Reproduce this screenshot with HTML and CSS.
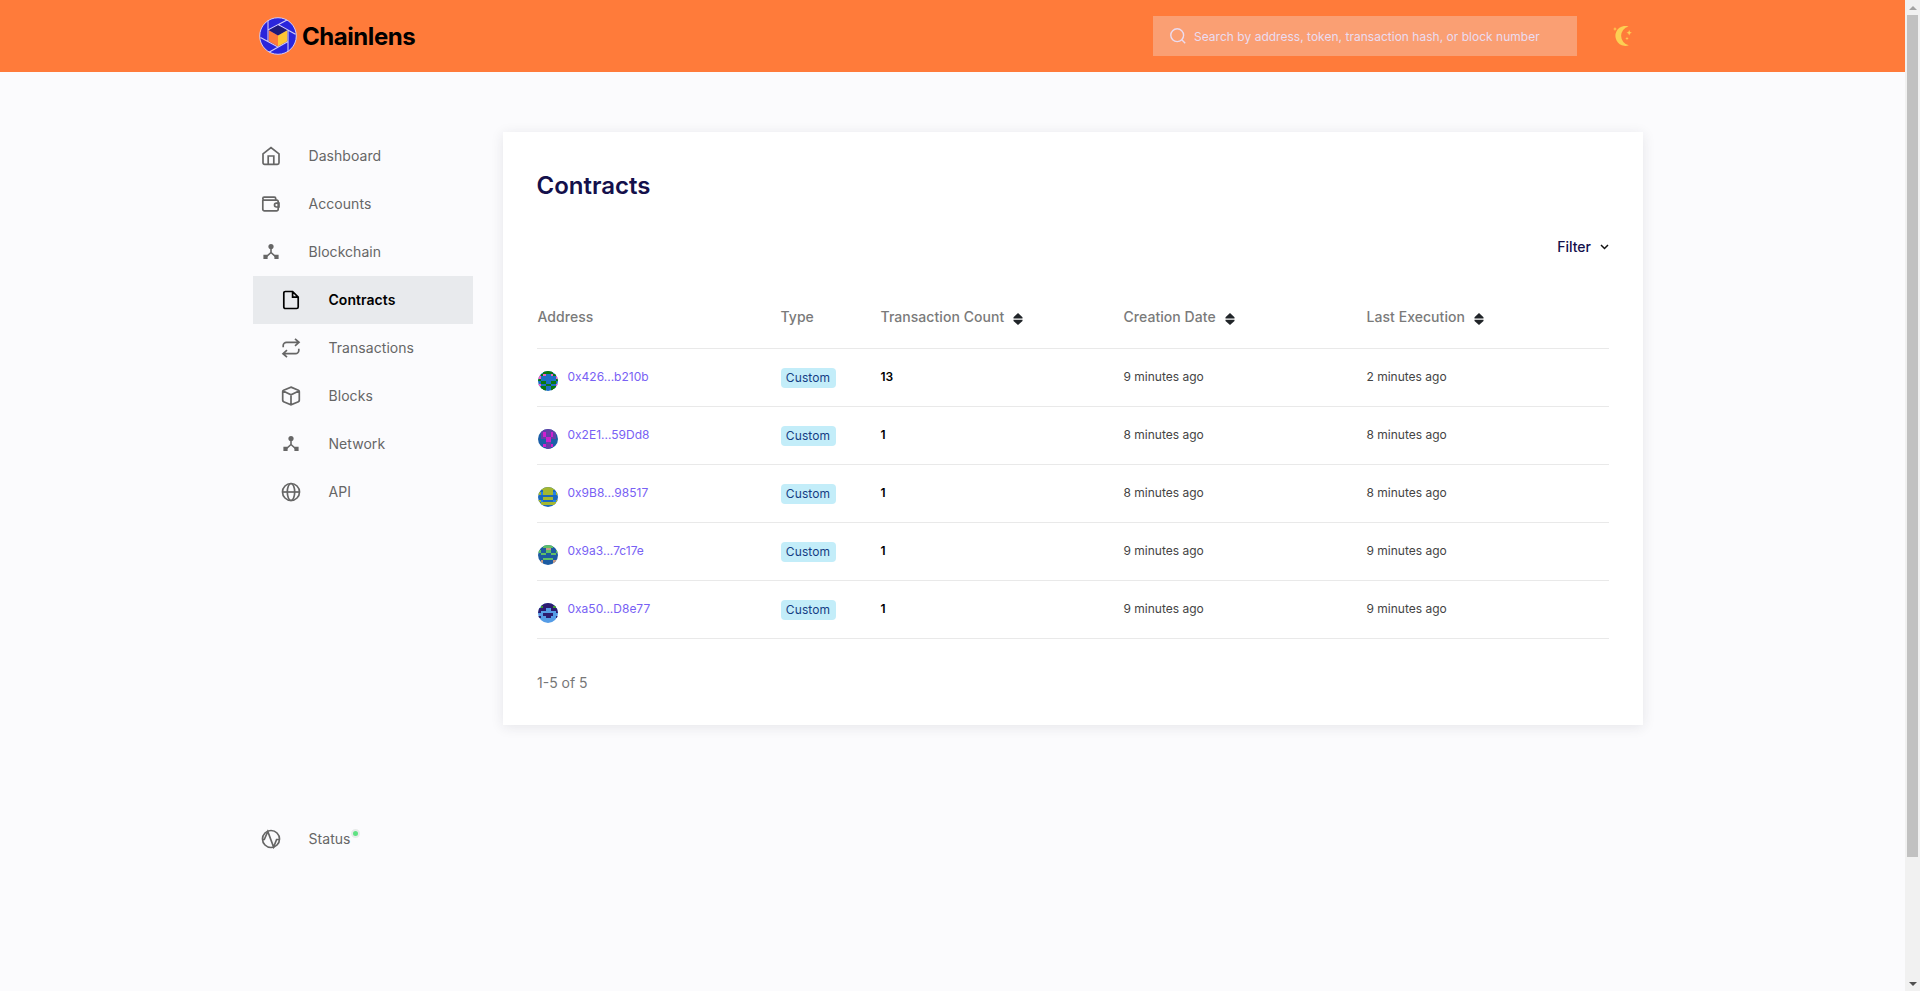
FILE: index.html
```html
<!DOCTYPE html>
<html lang="en">
<head>
<meta charset="utf-8">
<title>Chainlens</title>
<link rel="stylesheet" href="styles.css">
</head>
<body>
<svg class="defs" width="0" height="0">
  <defs>
    <symbol id="i-nodes" viewBox="0 0 20 20"><circle cx="10" cy="4.500" r="2.600" fill="currentColor"/><path d="M10 6v4.500L4.500 15.500M10 10.500l5.500 5" fill="none" stroke="currentColor" stroke-width="1.600"/><path d="M2.400 12.800h4.200V17H2.400zM13.400 12.800h4.200V17h-4.200z" fill="currentColor"/></symbol>
    <symbol id="i-sort" viewBox="0 0 10 12"><path d="M5 0l4.500 4.300v1.200H.5V4.300zM5 12L.5 7.900V6.800h9v1.100z" fill="#212529"/></symbol>
  </defs>
</svg>
<div class="viewport">
  <div class="page">
    <header class="header">
      <div class="brand">
        <svg class="brand-mark" viewBox="0 0 38 38"><circle cx="19" cy="19" r="18.300" fill="#2a25dc" stroke="#d9cdf0" stroke-width="1"/><path d="M9 13L28 2.900M19 7.500L36.500 17.300M29 13v21.500M29 24.500L10 35.200M19 30L1.500 20.500M9 24.500V3.500" fill="none" stroke="#d3cbf6" stroke-width="1.100"/><path d="M19 8.200l9.300 5.100L19 18.500 9.800 13.300z" fill="#201a78"/><path d="M9.800 13.300L19 18.500v11l-9.200-5.200z" fill="#ff7a3a"/><path d="M19 18.500l9.300-5.200v11L19 29.500z" fill="#ffc634"/></svg>
        <span class="brand-name">Chainlens</span>
      </div>
      <div class="search">
        <svg class="search-icon" viewBox="0 0 16 16" fill="none" stroke="currentColor" stroke-width="1.400"><circle cx="7.200" cy="7.200" r="6.400"/><path d="M11.800 11.800l3.400 3.400"/></svg>
        <span>Search by address, token, transaction hash, or block number</span>
      </div>
      <svg class="moon" viewBox="0 0 20 20" fill="#fcd053"><path d="M15.500 .4A10 10 0 1 0 15.800 19.300 9.700 9.700 0 0 1 15.500 .4z"/><path d="M2 1l.6 1.400L4 3l-1.400.6L2 5l-.6-1.400L0 3l1.400-.6zM16.200 4l.8 1.900 1.900.8-1.900.8-.8 1.900-.8-1.900-1.900-.8 1.900-.8zM14 10.800l.5 1.200 1.200.5-1.200.5-.5 1.200-.5-1.200-1.200-.5 1.200-.5z"/></svg>
    </header>
    <div class="content">
      <nav class="sidebar">
        <a class="item"><svg class="icon" viewBox="0 0 20 20"><path d="M2 7.800L10 1.600l8 6.200v9a1.600 1.600 0 0 1-1.600 1.600H3.600A1.600 1.600 0 0 1 2 16.800zM7.200 18.300V10h5.600v8.300"/></svg><span>Dashboard</span></a>
        <a class="item"><svg class="icon" viewBox="0 0 20 20"><path d="M1.800 5.800v9.400a1.600 1.600 0 0 0 1.600 1.600h12.200a1.600 1.600 0 0 0 1.600-1.600V7.400a1.300 1.300 0 0 0-1.300-1.300H3.100c-1.700 0-1.700-3 0-3h10.300a1.300 1.300 0 0 1 1.300 1.300V6M18 9.200h-2.600a1.900 1.900 0 0 0 0 3.800H18z"/></svg><span>Accounts</span></a>
        <a class="item"><svg class="icon solid"><use href="#i-nodes"/></svg><span>Blockchain</span></a>
        <a class="item sub active"><svg class="icon" viewBox="0 0 20 20"><path d="M11.600 1.500H4.400a1.600 1.600 0 0 0-1.600 1.600v13.800a1.600 1.600 0 0 0 1.600 1.600h11.200a1.600 1.600 0 0 0 1.600-1.600V7.100zV7.100h5.600"/></svg><span>Contracts</span></a>
        <a class="item sub"><svg class="icon" viewBox="0 0 20 20"><path d="M14 .8l4 3.500-4 3.500M18 4.300H5.500A3.300 3.300 0 0 0 2.200 7.600v1.600M6 12.200l-4 3.500 4 3.500M2 15.700h12.500a3.300 3.300 0 0 0 3.300-3.300v-1.600"/></svg><span>Transactions</span></a>
        <a class="item sub"><svg class="icon" viewBox="0 0 20 20"><path d="M10 1.100l7.400 3.200a1.500 1.500 0 0 1 .9 1.300v8.800a1.500 1.500 0 0 1-.9 1.300L10 18.900l-7.400-3.200a1.500 1.500 0 0 1-.9-1.300V5.600a1.500 1.500 0 0 1 .9-1.300zM2.100 5L10 8.800 17.900 5M10 8.800V19"/></svg><span>Blocks</span></a>
        <a class="item sub"><svg class="icon solid"><use href="#i-nodes"/></svg><span>Network</span></a>
        <a class="item sub"><svg class="icon" viewBox="0 0 20 20"><circle cx="10" cy="10" r="8.500"/><ellipse cx="10" cy="10" rx="3.700" ry="8.500"/><path d="M1.500 10h17"/></svg><span>API</span></a>
        <a class="item status"><svg class="icon" viewBox="0 0 20 20"><circle cx="10" cy="10" r="8.500"/><path d="M1.500 10.500h1.800l3.500-8 5.800 15.500 3-7.500h2.800"/></svg><span>Status</span><i class="dot"></i></a>
      </nav>
      <main class="card">
        <h1>Contracts</h1>
        <div class="filter"><span>Filter</span><svg class="chevron" viewBox="0 0 9 6"><path d="M1 1l3.500 3.500L8 1" fill="none" stroke="#111" stroke-width="1.500"/></svg></div>
        <div class="row head"><span>Address</span><span>Type</span><span>Transaction Count<svg class="sort"><use href="#i-sort"/></svg></span><span>Creation Date<svg class="sort"><use href="#i-sort"/></svg></span><span>Last Execution<svg class="sort"><use href="#i-sort"/></svg></span></div>
        <div class="row"><span class="addr"><svg class="ident" viewBox="0 0 8 8" shape-rendering="crispEdges"><path fill="#1c6fc6" d="M0 0h8v8H0z"/><path fill="#0a780e" d="M2 0h4v1H2zM1 1h2v1H1zM5 1h2v1H5zM0 3h1v1H0zM7 3h1v1H7zM1 4h2v1H1zM5 4h2v1H5zM3 5h2v1H3zM1 6h2v1H1zM5 6h2v1H5zM2 7h1v1H2zM5 7h1v1H5z"/><path fill="#f25fc0" d="M2 1h1v1H2zM5 1h1v1H5zM0 2h1v1H0zM7 2h1v1H7zM0 5h1v1H0zM7 5h1v1H7z"/></svg><b>0x426...b210b</b></span><span><em class="badge">Custom</em></span><strong>13</strong><span>9 minutes ago</span><span>2 minutes ago</span></div>
        <div class="row"><span class="addr"><svg class="ident" viewBox="0 0 8 8" shape-rendering="crispEdges"><path fill="#1b5fa8" d="M0 0h8v8H0z"/><path fill="#6440a8" d="M1 0h6v3H1zM3 5h2v3H3zM1 3h2v1H1zM5 3h2v1H5z"/><path fill="#cf1fcf" d="M2 1h1v2H2zM5 1h1v2H5zM3 3h2v2H3zM2 6h1v1H2zM5 6h1v1H5z"/></svg><b>0x2E1...59Dd8</b></span><span><em class="badge">Custom</em></span><strong>1</strong><span>8 minutes ago</span><span>8 minutes ago</span></div>
        <div class="row"><span class="addr"><svg class="ident" viewBox="0 0 8 8" shape-rendering="crispEdges"><path fill="#1c69bd" d="M0 0h8v8H0z"/><path fill="#a4b72f" d="M1 0h6v1H1zM2 1h4v2H2zM0 2h1v1H0zM7 2h1v1H7zM0 5h1v1H0zM7 5h1v1H7zM2 4h4v1H2zM1 6h2v1H1zM5 6h2v1H5zM3 6h2v1H3z"/><path fill="#2582e8" d="M1 2h1v1H1zM6 2h1v1H6zM1 5h1v1H1zM6 5h1v1H6z"/></svg><b>0x9B8...98517</b></span><span><em class="badge">Custom</em></span><strong>1</strong><span>8 minutes ago</span><span>8 minutes ago</span></div>
        <div class="row"><span class="addr"><svg class="ident" viewBox="0 0 8 8" shape-rendering="crispEdges"><path fill="#1c5ba1" d="M0 0h8v8H0z"/><path fill="#5fbf65" d="M2 0h4v1H2zM0 2h1v1H0zM7 2h1v1H7zM1 3h2v1H1zM5 3h2v1H5zM3 2h2v1H3zM2 5h4v1H2z"/><path fill="#c69a86" d="M3 1h2v1H3zM1 6h1v1H1zM6 6h1v1H6z"/></svg><b>0x9a3...7c17e</b></span><span><em class="badge">Custom</em></span><strong>1</strong><span>9 minutes ago</span><span>9 minutes ago</span></div>
        <div class="row"><span class="addr"><svg class="ident" viewBox="0 0 8 8" shape-rendering="crispEdges"><path fill="#559ce6" d="M0 0h8v8H0z"/><path fill="#2d1b70" d="M1 0h6v2H1zM0 2h3v1H0zM5 2h3v1H5zM0 3h1v1H0zM7 3h1v1H7zM2 4h4v1H2zM3 5h2v1H3zM0 5h1v1H0zM7 5h1v1H7z"/><path fill="#3d9a2c" d="M1 1h1v1H1zM6 1h1v1H6z"/></svg><b>0xa50...D8e77</b></span><span><em class="badge">Custom</em></span><strong>1</strong><span>9 minutes ago</span><span>9 minutes ago</span></div>
        <div class="pager">1-5 of 5</div>
      </main>
    </div>
  </div>
  <div class="scrollbar"><i class="up"></i><i class="thumb"></i><i class="down"></i></div>
</div>
</body>
</html>
```
FILE: styles.css
```css
* { box-sizing: border-box; }
body { margin: 0; font-family: Inter, "Liberation Sans", sans-serif; background: #fbfbfd; overflow: hidden; }
.defs { display: block; width: 0; height: 0; }
.viewport { display: flex; height: 991px; }
.page { flex: 1; }
.header { height: 72px; background: #ff7b3a; padding: 0 272px 0 259px; display: flex; align-items: center; }
.brand { display: flex; align-items: center; gap: 5px; flex: 1; }
.brand-mark { width: 38px; height: 38px; }
.brand-name { font-size: 24px; font-weight: 700; color: #000; letter-spacing: -0.450px; line-height: 30px; padding-top: 1px; }
.search { width: 424px; height: 40px; background: #fa9f73; display: flex; align-items: center; padding-left: 17px; gap: 8px; color: #ebdcf0; font-size: 12px; letter-spacing: 0.020px; white-space: nowrap; }
.search-icon { width: 16px; height: 16px; flex: none; }
.moon { width: 20px; height: 20px; margin-left: 36px; }
.content { display: flex; gap: 30px; padding: 60px 262px 0 253px; align-items: flex-start; }
.sidebar { width: 220px; display: flex; flex-direction: column; }
.item { height: 48px; display: flex; align-items: center; padding-left: 8px; font-size: 14px; letter-spacing: 0.050px; color: #666; }
.item span { margin-left: 27.500px; padding-bottom: 1px; }
.item.sub { padding-left: 28px; }
.item.active { background: #e8eaed; color: #000; font-weight: 600; }
.item.status { margin-top: 299px; }
.icon { width: 20px; height: 20px; fill: none; stroke: currentColor; stroke-width: 1.700; flex: none; }
.icon.solid { stroke: none; }
.dot { width: 9px; height: 9px; border: 2px solid #e8ebea; border-radius: 50%; background: #5fe283; margin-bottom: 12px; }
.card { width: 1140px; height: 593px; background: #fff; box-shadow: 0 2px 12px rgba(40,40,60,.1); padding: 38px 34px 0; }
h1 { margin: 0 0 0 -0.500px; font-size: 24px; line-height: 32px; font-weight: 600; letter-spacing: 0; color: #14104b; }
.filter { display: flex; justify-content: flex-end; align-items: center; gap: 9px; height: 24px; margin-top: 33px; font-size: 14px; font-weight: 500; color: #14104b; }
.filter span { padding-bottom: 1px; }
.chevron { width: 9px; height: 6px; }
.row { display: grid; grid-template-columns: 243px 100px 243px 243px 243px; align-items: center; height: 58px; border-bottom: 1px solid #e9e9e9; font-size: 12px; color: #444; padding-left: 0.500px; }
.row.head { height: 90px; padding-top: 25px; font-size: 14px; font-weight: 500; letter-spacing: 0.050px; color: #7a7a7a; }
.row span { white-space: nowrap; }
.row:not(.head) > span:nth-child(n+4) { padding-bottom: 2px; }
.sort { width: 10px; height: 12px; margin-left: 9px; vertical-align: -3px; }
.row strong { color: #000; font-weight: 600; padding-bottom: 2px; }
.addr { display: flex; align-items: center; gap: 9.500px; color: #7861f4; }
.addr b { font-weight: 400; padding-bottom: 2px; }
.ident { width: 20px; height: 20px; border-radius: 50%; margin-top: 7px; margin-left: 0.500px; }
.badge { display: inline-block; height: 20px; line-height: 20px; width: 55px; border-radius: 4px; text-align: center; background: #c3edf9; color: #153e84; font-style: normal; letter-spacing: 0.100px; vertical-align: middle; }
.pager { margin-top: 34px; font-size: 14px; line-height: 20px; color: #777; }
.scrollbar { width: 15px; background: #f1f1f1; padding: 6px 2px 5px; display: flex; flex-direction: column; align-items: center; }
.up, .down { width: 0; height: 0; border: 4px solid transparent; }
.up { border-top: 0; border-bottom-color: #a3a3a3; }
.thumb { width: 11px; height: 842px; margin: 5px 0 auto; background: #c1c1c1; }
.down { border-bottom: 0; border-top-color: #505050; }
```
